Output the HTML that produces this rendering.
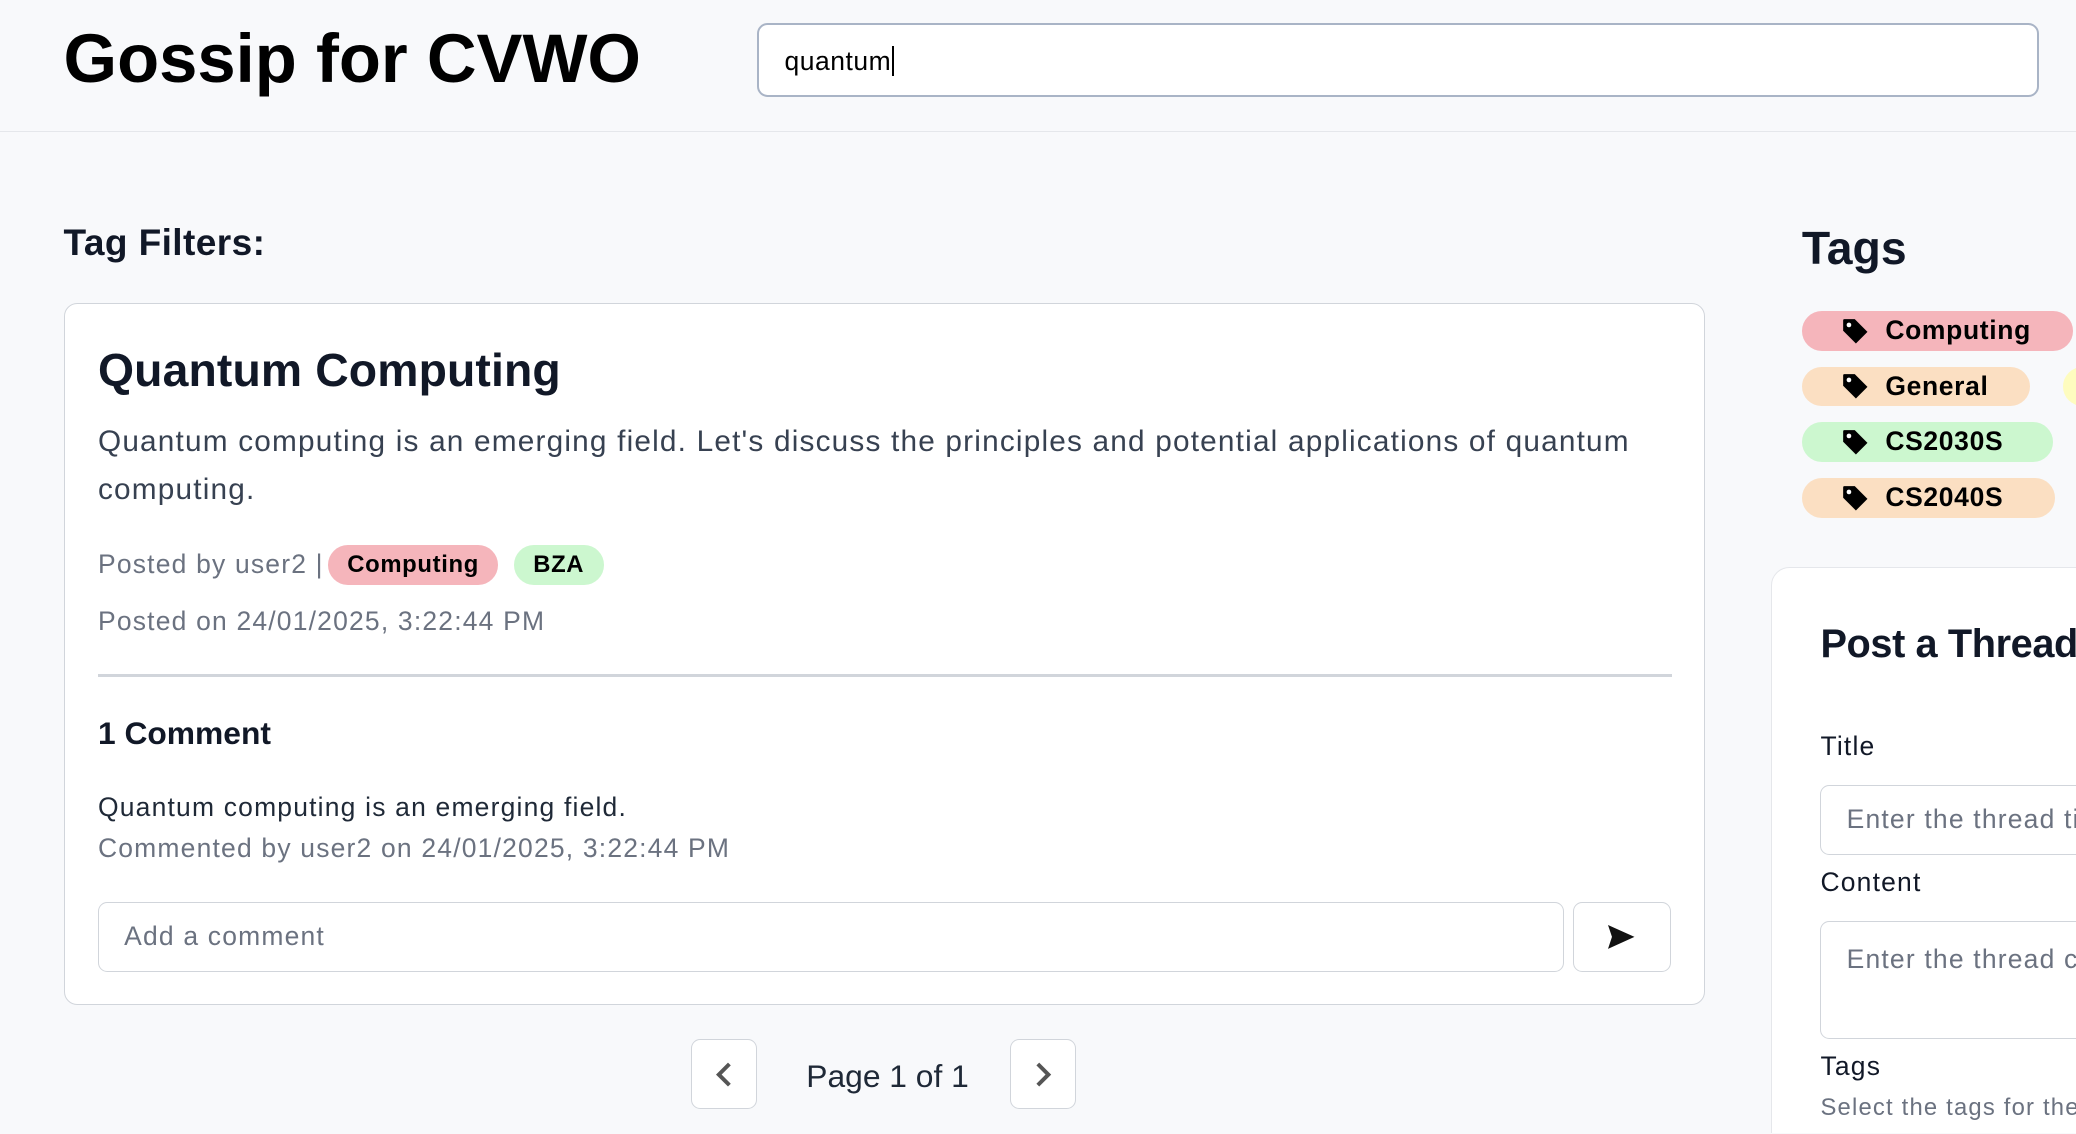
<!DOCTYPE html>
<html><head><meta charset="utf-8"><style>
*{box-sizing:border-box;margin:0;padding:0}
html,body{width:2076px;height:1134px;overflow:hidden;background:#f8f9fb}
#r{zoom:1.32398;width:1568px;height:856px;overflow:hidden;position:relative;font-family:"Liberation Sans",sans-serif;color:#111827}
.a{position:absolute;white-space:nowrap}
.w{letter-spacing:0.9px}
.chip{position:absolute;height:30px;border-radius:15px;font-weight:bold;font-size:20px;line-height:30px;color:#000;letter-spacing:0.5px}
.chip svg{position:absolute;left:30px;top:5px}
.chip span{position:absolute;left:63px}
.in{position:absolute;background:#fff;border:1px solid #d1d5db;border-radius:7px;font-size:20px;color:#6b7280;padding-left:19px;letter-spacing:0.9px;white-space:nowrap;overflow:hidden}
</style></head><body><div id="r">
<div class="a" style="left:0;top:0;width:1568px;height:100px;border-bottom:1px solid #e5e7eb"></div>
<div class="a" style="left:48px;top:14px;font-size:52px;font-weight:bold;color:#000;letter-spacing:0px">Gossip for CVWO</div>
<div class="a" style="left:572px;top:17px;width:968px;height:56px;background:#fff;border:2px solid #a9b4c6;border-radius:8px;font-size:20px;color:#000;padding:16px 0 0 19px;letter-spacing:0.4px">quantum<span style="border-left:2px solid #000;margin-left:1px"></span></div>
<div class="a" style="left:48px;top:167px;font-size:28px;font-weight:bold;letter-spacing:0.3px">Tag Filters:</div>
<div class="a" style="left:48px;top:229px;width:1240px;height:530px;background:#fff;border:1px solid #d1d5db;border-radius:10px"></div>
<div class="a" style="left:74px;top:259px;font-size:35px;font-weight:bold;letter-spacing:0.1px">Quantum Computing</div>
<div class="a w" style="left:74px;top:316px;font-size:22.5px;line-height:36px;color:#374151">Quantum computing is an emerging field. Let's discuss the principles and potential applications of quantum<br>computing.</div>
<div class="a w" style="left:74px;top:415px;font-size:20px;color:#6b7280">Posted by user2 |</div>
<div class="chip" style="left:248px;top:412px;width:128px;background:#f5b5bb;font-size:18px;text-align:center">Computing</div>
<div class="chip" style="left:388px;top:412px;width:68px;background:#ccf7cf;font-size:18px;text-align:center">BZA</div>
<div class="a w" style="left:74px;top:458px;font-size:20px;color:#6b7280">Posted on 24/01/2025, 3:22:44 PM</div>
<div class="a" style="left:74px;top:509px;width:1189px;height:2px;background:#d1d5db"></div>
<div class="a" style="left:74px;top:540px;font-size:24px;font-weight:bold">1 Comment</div>
<div class="a w" style="left:74px;top:598px;font-size:20px;color:#1f2937">Quantum computing is an emerging field.</div>
<div class="a w" style="left:74px;top:629px;font-size:20px;color:#6b7280">Commented by user2 on 24/01/2025, 3:22:44 PM</div>
<div class="in" style="left:74px;top:681px;width:1107px;height:53px;line-height:51px">Add a comment</div>
<div class="in" style="left:1188px;top:681px;width:74px;height:53px"><svg style="position:absolute;left:26px;top:17px" width="20" height="18" viewBox="0 0 20 18"><path d="M0 0L20 9L0 18L3 9Z" fill="#111"/></svg></div>
<div class="in" style="left:522px;top:785px;width:50px;height:53px"><svg style="position:absolute;left:-1px;top:15px" width="50" height="22"><path d="M29 3L21 11L29 19" stroke="#555" stroke-width="3" fill="none"/></svg></div>
<div class="a" style="left:609px;top:799px;font-size:24px;color:#1f2937">Page 1 of 1</div>
<div class="in" style="left:763px;top:785px;width:50px;height:53px"><svg style="position:absolute;left:-1px;top:15px" width="50" height="22"><path d="M21 3L29 11L21 19" stroke="#555" stroke-width="3" fill="none"/></svg></div>
<div class="a" style="left:1361px;top:167px;font-size:35px;font-weight:bold">Tags</div>
<svg width="0" height="0" style="position:absolute"><defs><symbol id="t" viewBox="0 0 24 24"><path d="M1 2Q1 1 2 1H11L22 12L12 22L1 11Z" fill="#000"/><circle cx="6" cy="6" r="2" fill="#fff"/></symbol></defs></svg>
<div class="chip" style="left:1361px;top:235px;width:205px;background:#f5b5bb"><svg width="21" height="21"><use href="#t"/></svg><span>Computing</span></div>
<div class="chip" style="left:1361px;top:277px;width:172px;background:#fbdfc2"><svg width="21" height="21"><use href="#t"/></svg><span>General</span></div>
<div class="chip" style="left:1558px;top:277px;width:40px;background:#fefcbf"></div>
<div class="chip" style="left:1361px;top:319px;width:190px;background:#ccf7cf"><svg width="21" height="21"><use href="#t"/></svg><span>CS2030S</span></div>
<div class="chip" style="left:1361px;top:361px;width:191px;background:#fbdfc2"><svg width="21" height="21"><use href="#t"/></svg><span>CS2040S</span></div>
<div class="a" style="left:1338px;top:428px;width:300px;height:500px;background:#fff;border:1px solid #e5e7eb;border-radius:14px"></div>
<div class="a" style="left:1375px;top:470px;font-size:30px;font-weight:bold;letter-spacing:-0.3px">Post a Thread</div>
<div class="a w" style="left:1375px;top:552px;font-size:20px">Title</div>
<div class="in" style="left:1375px;top:593px;width:260px;height:53px;line-height:51px">Enter the thread title</div>
<div class="a w" style="left:1375px;top:655px;font-size:20px">Content</div>
<div class="in" style="left:1375px;top:696px;width:260px;height:89px;line-height:56px">Enter the thread content</div>
<div class="a w" style="left:1375px;top:794px;font-size:20px">Tags</div>
<div class="a w" style="left:1375px;top:826px;font-size:18px;color:#6b7280">Select the tags for the thread</div>
</div></body></html>
